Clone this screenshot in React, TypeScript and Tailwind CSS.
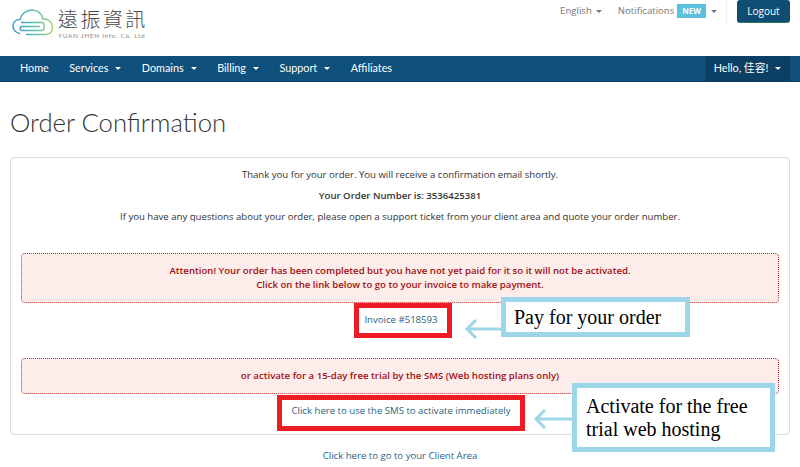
const navLinks = [
  { label: "Home", caret: false },
  { label: "Services", caret: true },
  { label: "Domains", caret: true },
  { label: "Billing", caret: true },
  { label: "Support", caret: true },
  { label: "Affiliates", caret: false },
];

function Caret({ color = "border-t-white" }: { color?: string }) {
  return <span className={`inline-block w-0 h-0 border-x-[3px] border-x-transparent border-t-[3px] ${color}`} />;
}

function Logo() {
  return (
    <div className="flex items-start">
      <svg width="42" height="28" viewBox="0 0 42 28" fill="none" className="mt-[9px]">
        <defs>
          <linearGradient id="cloudGrad" x1="0" y1="0" x2="42" y2="0" gradientUnits="userSpaceOnUse">
            <stop offset="0" stopColor="#2f8fc4" />
            <stop offset="0.55" stopColor="#5cc0b0" />
            <stop offset="1" stopColor="#a6cf6b" />
          </linearGradient>
        </defs>
        <path
          d="M8 24.5 C3.5 24 1 20.5 1 17 C1 13 4 10.5 8 10.5 C9 5 14 1 20 1 C26 1 30 5 31 10 C36 9.5 40.5 13 40.5 18 C40.5 22 38 25 34 25.5 H14"
          stroke="url(#cloudGrad)"
          strokeWidth="1.4"
        />
        <path d="M28 17.5 H10 C7.5 17.5 7.5 21.5 10 21.5 H30 C33 21.5 33 13.5 30 13.5 H9" stroke="url(#cloudGrad)" strokeWidth="1.4" />
      </svg>
      <div className="ml-[4px] mt-[7px] flex flex-col">
        <span className="font-['Noto_Sans_CJK_TC',sans-serif] text-[20px] leading-[24px] font-light tracking-[2.4px] text-[#4a4a4a]">遠振資訊</span>
        <span className="font-['Lato',sans-serif] text-[6.5px] leading-[9px] tracking-[0.65px] text-[#8a8a8a]">YUAN JHEN Info. Co. Ltd</span>
      </div>
    </div>
  );
}

export default function App() {
  return (
    <div className="relative w-[800px] h-[467px] overflow-hidden bg-white font-['Open_Sans',sans-serif] text-[9.6px] text-[#333]">
      <header className="h-[56px] flex justify-between pl-[12px]">
        <Logo />
        <div className="flex items-start">
          <span className="mt-[4px] flex items-center gap-[4px] text-[#777]">
            English <Caret color="border-t-[#777]" />
          </span>
          <span className="ml-[16px] mt-[4px] flex items-center text-[#777]">
            Notifications
            <span className="ml-[3px] bg-[#5bc0de] text-white font-bold text-[8px] leading-[14px] px-[5px] h-[14px]">NEW</span>
            <span className="ml-[5px] flex"><Caret color="border-t-[#777]" /></span>
          </span>
          <div className="ml-[9px] h-[24px] border-l border-[#eee]" />
          <button className="ml-[10px] mr-[10px] h-[23px] w-[53px] rounded-[3px] bg-[#0f4d72] border-b border-[#2b7a5e] text-white text-[10px]">Logout</button>
        </div>
      </header>

      <nav className="h-[26px] bg-[#0f507c] border-b border-[#0a3b5c] flex justify-between font-['Lato',sans-serif] text-[10.8px] text-white">
        <ul className="flex items-center pl-[20px] gap-[20.5px]">
          {navLinks.map((link) => (
            <li key={link.label} className="flex items-center gap-[7px]">
              {link.label}
              {link.caret && <Caret />}
            </li>
          ))}
        </ul>
        <div className="w-[85px] mr-[10px] bg-[#0b3f63] flex items-center justify-center gap-[7px]">
          <span className="font-['Lato','Noto_Sans_CJK_TC',sans-serif]">Hello, 佳容!</span>
          <Caret />
        </div>
      </nav>

      <main className="px-[10px]">
        <h1 className="mt-[24px] text-[25.7px] leading-[32px] font-light text-[#333] font-['Lato',sans-serif]">Order Confirmation</h1>

        <section className="mt-[19px] h-[278px] border border-[#ddd] rounded-[4px] px-[10px] pt-[9px] flex flex-col items-center">
          <p className="leading-[15px]">Thank you for your order. You will receive a confirmation email shortly.</p>
          <p className="mt-[6px] leading-[15px] font-semibold">Your Order Number is: 3536425381</p>
          <p className="mt-[6px] leading-[15px]">If you have any questions about your order, please open a support ticket from your client area and quote your order number.</p>

          <div className="mt-[29px] w-full h-[50px] rounded-[4px] border border-dotted border-[#b03030] bg-[#fcedeb] flex flex-col items-center justify-center text-[#a01010] font-semibold leading-[14px]">
            <p>Attention! Your order has been completed but you have not yet paid for it so it will not be activated.</p>
            <p>Click on the link below to go to your invoice to make payment.</p>
          </div>

          <a className="ml-[6px] w-[98px] h-[35px] border-[5px] border-[#ed1c24] pr-[4px] flex items-center justify-center text-[#2b5f7f]">Invoice #518593</a>

          <div className="mt-[20px] w-full h-[36px] rounded-[4px] border border-dotted border-[#b03030] bg-[#fcedeb] flex items-center justify-center text-[#a01010] font-semibold">
            or activate for a 15-day free trial by the SMS (Web hosting plans only)
          </div>

          <a className="mt-[1px] ml-[2px] w-[248px] h-[36px] border-[5px] border-[#ed1c24] pb-[3px] flex items-center justify-center text-[#2b5f7f] whitespace-nowrap">Click here to use the SMS to activate immediately</a>
        </section>

        <p className="mt-[14px] text-center text-[#2b5f7f]">Click here to go to your Client Area</p>
      </main>

      {/* callouts pasted over the page */}
      <div className="absolute left-[501px] top-[297px] w-[189px] h-[40px] border-[5px] border-[#9dd6e8] bg-white flex items-center pl-[8px] font-['Liberation_Serif',serif] text-[20px] text-black">
        Pay for your order
      </div>
      <svg className="absolute left-[464px] top-[318px]" width="38" height="22" viewBox="0 0 38 22" fill="none">
        <path d="M38 11 H3 M12 2 L3 11 L12 20" stroke="#9dd6e8" strokeWidth="3" />
      </svg>
      <div className="absolute left-[572px] top-[383px] w-[203px] h-[69px] border-[5px] border-[#9dd6e8] bg-white pl-[9px] flex items-center font-['Liberation_Serif',serif] text-[20px] leading-[23px] text-black">
        <span>Activate for the free<br />trial web hosting</span>
      </div>
      <svg className="absolute left-[533px] top-[408px]" width="40" height="22" viewBox="0 0 40 22" fill="none">
        <path d="M40 11 H3 M12 2 L3 11 L12 20" stroke="#9dd6e8" strokeWidth="3" />
      </svg>
    </div>
  );
}
